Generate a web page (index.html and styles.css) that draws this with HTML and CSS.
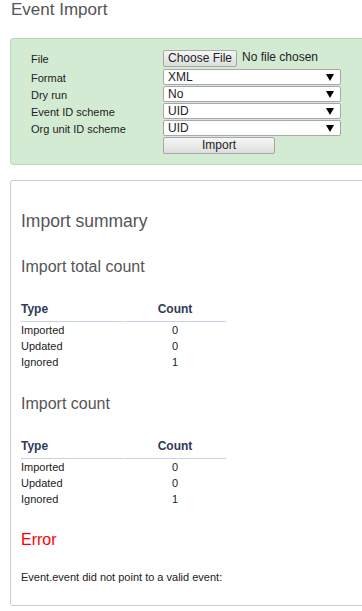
FILE: index.html
```html
<!DOCTYPE html>
<html>
<head>
  <meta charset="UTF-8">
  <title>Event Import</title>
  <link rel="stylesheet" href="styles.css">
</head>
<body>
  <h1 class="page-title">Event Import</h1>

  <div class="import-form">
    <div class="form-label">File</div>
    <div class="form-field file-field">
      <button class="btn file-btn">Choose File</button>
      <span class="file-name">No file chosen</span>
    </div>

    <div class="form-label">Format</div>
    <div class="form-field select-wrap">
      <select class="form-select">
        <option>XML</option>
        <option>JSON</option>
        <option>CSV</option>
      </select>
      <svg class="select-arrow" width="8" height="7" viewBox="0 0 8 7"><polygon points="0,0 8,0 4,7" fill="#000"/></svg>
    </div>

    <div class="form-label">Dry run</div>
    <div class="form-field select-wrap">
      <select class="form-select">
        <option>No</option>
        <option>Yes</option>
      </select>
      <svg class="select-arrow" width="8" height="7" viewBox="0 0 8 7"><polygon points="0,0 8,0 4,7" fill="#000"/></svg>
    </div>

    <div class="form-label">Event ID scheme</div>
    <div class="form-field select-wrap">
      <select class="form-select">
        <option>UID</option>
        <option>Code</option>
      </select>
      <svg class="select-arrow" width="8" height="7" viewBox="0 0 8 7"><polygon points="0,0 8,0 4,7" fill="#000"/></svg>
    </div>

    <div class="form-label">Org unit ID scheme</div>
    <div class="form-field select-wrap">
      <select class="form-select">
        <option>UID</option>
        <option>Code</option>
        <option>Name</option>
      </select>
      <svg class="select-arrow" width="8" height="7" viewBox="0 0 8 7"><polygon points="0,0 8,0 4,7" fill="#000"/></svg>
    </div>

    <div class="form-label"></div>
    <div class="form-field">
      <button class="btn import-btn">Import</button>
    </div>
  </div>

  <div class="summary">
    <h2 class="summary-title">Import summary</h2>

    <h3 class="section-title">Import total count</h3>
    <table class="count-table">
      <tr><th class="col-type">Type</th><th class="col-count">Count</th></tr>
      <tr><td>Imported</td><td class="col-count">0</td></tr>
      <tr><td>Updated</td><td class="col-count">0</td></tr>
      <tr><td>Ignored</td><td class="col-count">1</td></tr>
    </table>

    <h3 class="section-title">Import count</h3>
    <table class="count-table">
      <tr><th class="col-type">Type</th><th class="col-count">Count</th></tr>
      <tr><td>Imported</td><td class="col-count">0</td></tr>
      <tr><td>Updated</td><td class="col-count">0</td></tr>
      <tr><td>Ignored</td><td class="col-count">1</td></tr>
    </table>

    <h3 class="section-title error-title">Error</h3>
    <div class="error-msg">Event.event did not point to a valid event:</div>
  </div>
</body>
</html>
```

FILE: styles.css
```css
html, body {
  overflow: hidden;
}

body {
  margin: 0;
  padding: 0 10px;
  font-family: "Liberation Sans", Arial, sans-serif;
  font-size: 11px;
  color: #222;
  background-color: white;
}

.page-title {
  margin: 0 0 18px 1px;
  font-size: 17px;
  line-height: 20px;
  font-weight: normal;
  color: #555;
}

.import-form {
  width: 400px;
  display: grid;
  grid-template-columns: 132px 178px;
  grid-template-rows: 18px 16px 16px 16px 16px 17px;
  row-gap: 1px;
  padding: 11px 20px 10px 20px;
  background-color: #d3ebd3;
  border: 1px solid #b5dcb5;
  border-radius: 3px;
}

.form-label {
  line-height: 16px;
  padding-top: 1px;
  color: #222;
}

.form-field {
  display: flex;
  align-items: flex-start;
}

.btn {
  font-family: "Liberation Sans", Arial, sans-serif;
  font-size: 12px;
  color: #222;
  background: linear-gradient(#f6f6f6, #dddddd);
  border: 1px solid #a8a8a8;
  border-radius: 2px;
  padding: 0;
  height: 17px;
  line-height: 15px;
  cursor: pointer;
}

.file-btn {
  width: 74px;
}

.file-name {
  margin-left: 5px;
  font-size: 12px;
  line-height: 15px;
  color: #222;
}

.import-btn {
  width: 112px;
}

.select-wrap {
  position: relative;
}

.form-select {
  appearance: none;
  -webkit-appearance: none;
  width: 178px;
  height: 16px;
  margin: 0;
  padding: 0 0 0 4px;
  font-family: "Liberation Sans", Arial, sans-serif;
  font-size: 12px;
  line-height: 14px;
  color: #222;
  background-color: white;
  border: 1px solid #a8a8a8;
  border-radius: 2px;
}

.select-arrow {
  position: absolute;
  left: 163px;
  top: 5px;
  pointer-events: none;
}

.summary {
  width: 400px;
  margin-top: 15px;
  padding: 30px 10px 20px 10px;
  border: 1px solid #ccc;
  border-radius: 3px;
}

.summary-title {
  margin: 0 0 26px 0;
  font-size: 17.5px;
  line-height: 20px;
  font-weight: normal;
  color: #555;
}

.section-title {
  margin: 0 0 24px 0;
  font-size: 16px;
  line-height: 20px;
  font-weight: normal;
  color: #555;
}

.count-table {
  border-collapse: separate;
  border-spacing: 1px 0;
  margin: 0 0 24px -1px;
}

.count-table th {
  font-size: 12px;
  font-weight: bold;
  line-height: 16px;
  padding: 0 0 4px 0;
  color: #2f3b55;
  border-bottom: 1px solid #c8d2e0;
  text-align: left;
}

.count-table td {
  padding: 0;
  line-height: 16px;
  height: 16px;
}

.col-type {
  width: 102px;
}

.count-table .col-count {
  width: 102px;
  text-align: center;
}

.error-title {
  color: #f00;
  margin-top: -1px;
  margin-bottom: 19px;
}

.error-msg {
  line-height: 16px;
  color: #222;
}
```
